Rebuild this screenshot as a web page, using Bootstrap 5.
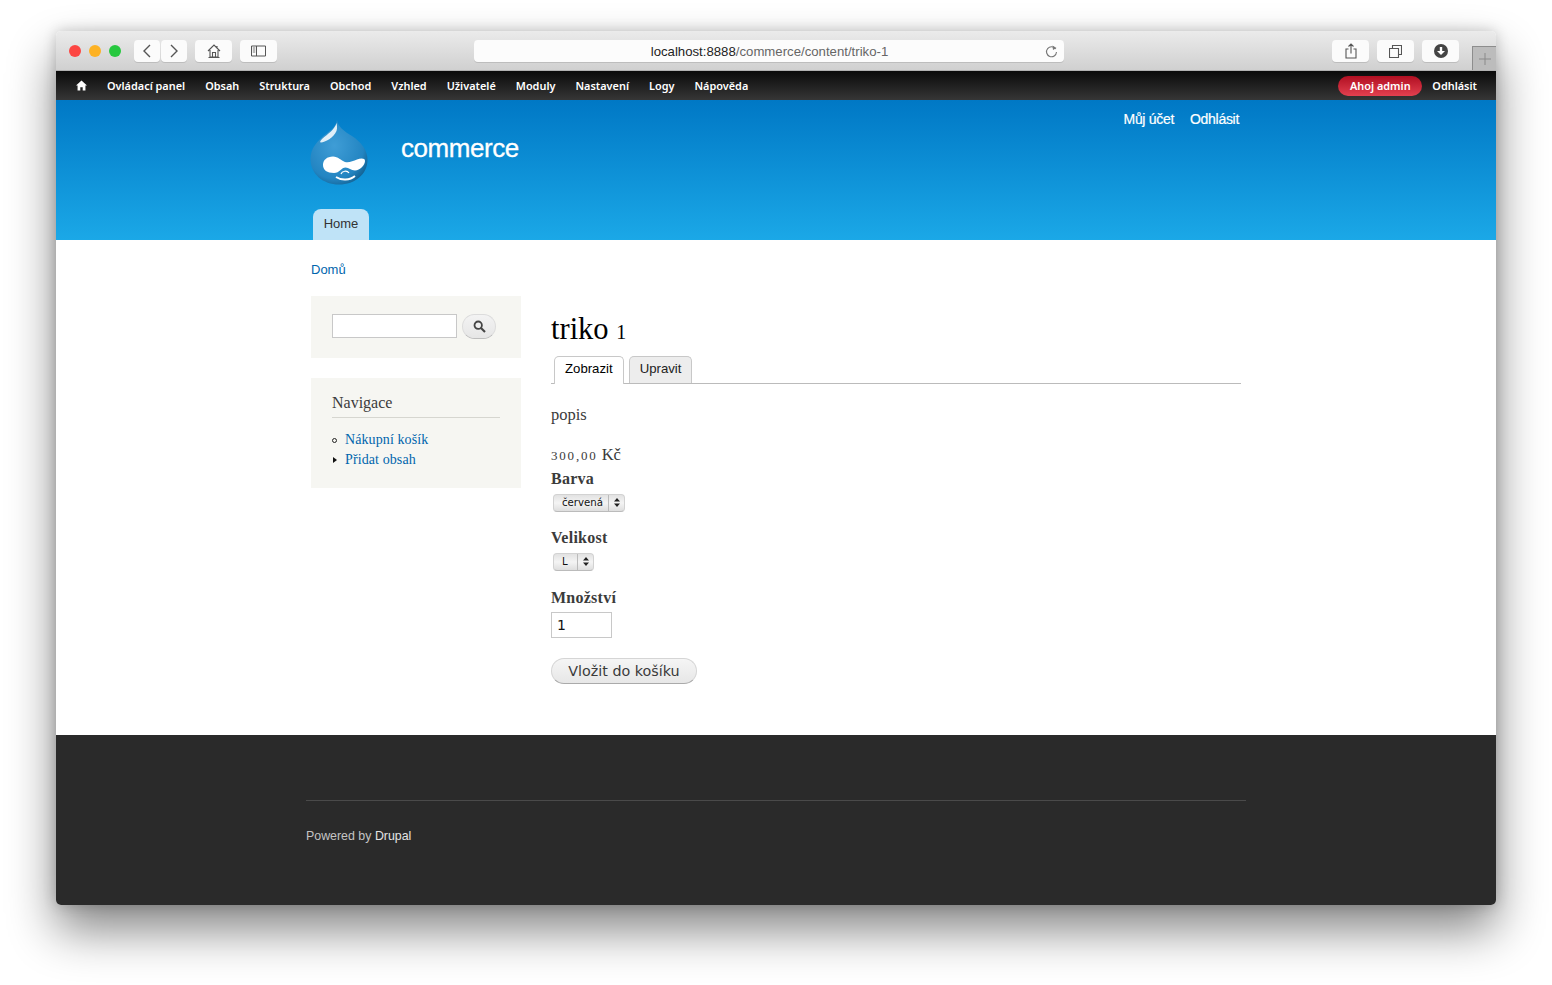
<!DOCTYPE html>
<html lang="cs">
<head>
  <meta charset="UTF-8">
  <title>triko 1 | commerce</title>
  <link href="https://cdn.jsdelivr.net/npm/bootstrap@5.3.3/dist/css/bootstrap.min.css" rel="stylesheet">
  <script src="https://cdn.jsdelivr.net/npm/bootstrap@5.3.3/dist/js/bootstrap.bundle.min.js"></script>
  <style>
    body { background: #fff; padding: 31px 56px 80px; font-family: "Liberation Serif", serif; color: #3b3b3b; }
    a { text-decoration: none; }
    .win { height: 874px; border-radius: 5px; background: #fff; box-shadow: 0 25px 48px rgba(0,0,0,.48), 0 0 14px rgba(0,0,0,.2); overflow: hidden; }

    .titlebar { height: 40px; padding: 9px 0 0 13px; background: linear-gradient(#ebebeb, #d0d0d0); border-bottom: 1px solid #b1b1b1; }
    .lights { gap: 8px; margin-right: 13px; height: 22px; }
    .light { width: 12px; height: 12px; border-radius: 50%; }
    .tb-btn { height: 22px; width: 37px; background: #fbfbfb; border-radius: 4px; box-shadow: 0 1px 0 #bdbdbd; }
    .tb-narrow { width: 26px; }
    .urlbar { width: 590px; height: 22px; margin-left: 197px; margin-right: 268px; background: #fcfcfc; border-radius: 4px; box-shadow: 0 1px 0 #bdbdbd; font: 13.200px "Liberation Sans", sans-serif; color: #666; padding: 0 6px; }
    .urlbar b { font-weight: 400; color: #222; }
    .urlbar .url-text { flex: 1; text-align: center; padding-left: 14px; }
    .newtab { width: 24px; height: 24px; margin-left: 13px; margin-top: 6px; background: #bcbcbc; border: 1px solid #8d8d8d; border-right: 0; border-bottom: 0; }

    .admin-bar { height: 29px; padding: 0 19px 0 20px; background: linear-gradient(#0a0a0a, #363636); font: 600 10.900px "Noto Sans", sans-serif; }
    .admin-bar a { color: #fff; }
    .admin-menu { gap: 20px; }
    .hello { height: 20px; width: 84px; border-radius: 10px; margin-right: 10px; background: linear-gradient(#b10f22, #e2404f); }

    .site-head { height: 140px; background: linear-gradient(#0078c5, #1ba8e7); }
    .wrap { width: 940px; margin: 0 auto; }
    .head-top { padding: 19px 7px 0 4px; height: 109px; }
    .site-name { font: 26px "Liberation Sans", sans-serif; color: #fff; letter-spacing: -.45px; margin-left: 33px; margin-top: 14px; -webkit-text-stroke: .3px #fff; }
    .sec-menu { gap: 16px; font: 14px "Liberation Sans", sans-serif; letter-spacing: -.3px; margin-left: auto; margin-top: -8px; -webkit-text-stroke: .2px #fff; }
    .sec-menu a { color: #fff; }
    .home-tab { display: block; margin-left: 7px; width: 56px; height: 31px; text-align: center; background: #bfe3f7; border-radius: 8px 8px 0 0; color: #333; font: 13px/30px "Liberation Sans", sans-serif; }

    .page-body { height: 495px; }
    .crumbs { padding: 22px 0 0 5px; height: 56px; font: 13px "Liberation Sans", sans-serif; }
    .crumbs a { color: #0065ad; }
    .side-col { width: 210px; margin-left: 5px; margin-right: 30px; }
    .side-box { background: #f6f6f2; padding: 18px 21px; margin-bottom: 20px; }
    .box-search { height: 62px; }
    .search-in { width: 125px; height: 24px; border: 1px solid #c8c8c8; background: #fff; padding: 0 4px; }
    .search-go { width: 34px; height: 25px; margin-left: 5px; padding: 0; border: 1px solid #dcdcdc; border-bottom-color: #bdbdbd; border-radius: 13px; background: linear-gradient(#f3f3f3, #e6e6e6); }
    .box-nav { height: 110px; padding-top: 15px; }
    .nav-title { font: 16px/20px "Liberation Serif", serif; color: #3b3b3b; padding-bottom: 4px; border-bottom: 1px solid #d6d6d0; width: 168px; margin: 0 0 12px; }
    .nav-links { list-style: none; margin: 0; padding: 0; font-size: 14px; line-height: 20px; letter-spacing: .1px; }
    .nav-links li { padding-left: 13px; position: relative; }
    .nav-links a { color: #0065ad; }
    .dot { position: absolute; left: 0; top: 8px; width: 5px; height: 5px; border: 1px solid #222; border-radius: 50%; }
    .tri { position: absolute; left: 1px; top: 7px; width: 0; height: 0; border-left: 4px solid #111; border-top: 3.500px solid transparent; border-bottom: 3.500px solid transparent; }

    .main-col { width: 690px; }
    .page-title { font: 30.500px/36px "Liberation Serif", serif; color: #000; margin: 0; padding-top: 15px; height: 60px; }
    .old-num { font-size: 20px; letter-spacing: 1px; }
    .view-tabs { height: 28px; padding-left: 3px; gap: 5px; border-bottom: 1px solid #bbb; font: 13.200px "Liberation Sans", sans-serif; }
    .view-tab { height: 27px; line-height: 24px; padding: 0 10px; border: 1px solid #c8c8c8; border-bottom: 0; border-radius: 5px 5px 0 0; background: #ededed; color: #222; }
    .view-tab.on { height: 28px; background: #fff; color: #000; }
    .body-txt { font-size: 16.500px; line-height: 20px; color: #3b3b3b; }
    .price-num { font-size: 13px; letter-spacing: 1.800px; }
    .fld-label { font-weight: 700; font-size: 16px; line-height: 20px; color: #3b3b3b; letter-spacing: .25px; }
    .sel-box { display: inline-flex; align-items: stretch; height: 18px; margin-left: 2px; border-radius: 4px; background: linear-gradient(#e2e2e2, #f4f4f4 50%, #dedede); border: 1px solid #d2d2d2; border-bottom-color: #bbb; }
    .sel-box select { appearance: none; border: 0; background: transparent; font: 10.200px "DejaVu Sans", sans-serif; color: #111; padding: 0 0 0 8px; outline: 0; }
    .sel-wide { width: 54px; }
    .sel-thin { width: 23px; }
    .sel-arrow { width: 16px; border-left: 1px solid #bbb; display: flex; align-items: center; justify-content: center; }
    .qty-in { width: 61px; height: 26px; border: 1px solid #c8c8c8; padding: 0 5px; font: 14px "DejaVu Sans", sans-serif; color: #111; display: block; }
    .buy-btn { height: 26px; width: 146px; padding: 0; border: 1px solid #d5d5d5; border-bottom-color: #aaa; border-radius: 13px; background: linear-gradient(#f5f5f5, #e7e7e7); font: 14.300px "DejaVu Sans", sans-serif; color: #3a3a3a; }

    .site-foot { height: 170px; background: #2a2a2a; padding-top: 65px; }
    .foot-line { border-top: 1px solid #4a4a4a; padding-top: 27px; font: 12.400px/17px "Liberation Sans", sans-serif; color: #c4c4c4; }
    .foot-line a { color: #e4e4e4; }
  </style>
</head>
<body>
  <div class="win d-flex flex-column">
    <div class="titlebar d-flex align-items-start">
      <div class="lights d-flex align-items-center">
        <span class="light" style="background:#fc4643"></span>
        <span class="light" style="background:#fdb224"></span>
        <span class="light" style="background:#27c83f"></span>
      </div>
      <div class="d-flex" style="gap:1px">
        <span class="tb-btn tb-narrow d-flex align-items-center justify-content-center"><svg width="10" height="14" viewBox="0 0 10 14"><path d="M8 1 2 7l6 6" fill="none" stroke="#555" stroke-width="1.400"/></svg></span>
        <span class="tb-btn tb-narrow d-flex align-items-center justify-content-center"><svg width="10" height="14" viewBox="0 0 10 14"><path d="m2 1 6 6-6 6" fill="none" stroke="#555" stroke-width="1.400"/></svg></span>
      </div>
      <span class="tb-btn d-flex align-items-center justify-content-center ms-2"><svg width="14" height="14" viewBox="0 0 14 14"><path d="M1 7 7 1l6 6M3 6v7h8V6M1.500 13.500h11M5.500 13V8.500h3V13M10 2v2.500" fill="none" stroke="#555" stroke-width="1.100"/></svg></span>
      <span class="tb-btn d-flex align-items-center justify-content-center ms-2"><svg width="15" height="12" viewBox="0 0 15 12"><path d="M.5 1h14v10H.5zM5.500 1v10" fill="none" stroke="#555"/><path d="M1.800 3h2.500M1.800 5h2.500M1.800 7h2.500" stroke="#777"/></svg></span>
      <div class="urlbar d-flex align-items-center">
        <span class="url-text"><b>localhost:8888</b>/commerce/content/triko-1</span>
        <svg width="13" height="13" viewBox="0 0 13 13"><path d="M10.700 4A5 5 0 1 0 11.500 7" fill="none" stroke="#777" stroke-width="1.100"/><path d="M7.500 .5 11.500 3 8 5z" fill="#777"/></svg>
      </div>
      <span class="tb-btn d-flex align-items-center justify-content-center"><svg width="12" height="16" viewBox="0 0 12 16"><path d="M3.500 6H1v9h10V6H8.500M6 10.500V1M3.500 3.500 6 1l2.500 2.500" fill="none" stroke="#555" stroke-width="1.100"/></svg></span>
      <span class="tb-btn d-flex align-items-center justify-content-center ms-2"><svg width="13" height="13" viewBox="0 0 13 13"><path d="M.5 3.500h9v9h-9zM3.500 3.500v-3h9v9h-3" fill="none" stroke="#555" stroke-width="1.100"/></svg></span>
      <span class="tb-btn d-flex align-items-center justify-content-center ms-2"><svg width="14" height="14" viewBox="0 0 14 14"><circle cx="7" cy="7" r="7" fill="#444"/><path d="M5.800 3h2.400v4H11L7 11 3 7h2.800z" fill="#fff"/></svg></span>
      <span class="newtab d-flex align-items-center justify-content-center"><svg width="12" height="12" viewBox="0 0 12 12"><path d="M6 0v12M0 6h12" stroke="#8a8a8a"/></svg></span>
    </div>

    <div class="admin-bar d-flex align-items-center">
      <div class="admin-menu d-flex align-items-center">
        <a href="#" class="d-flex"><svg width="11" height="11" viewBox="0 0 12 11"><path d="M6 0 0 5.500h1.700V11h3V7.500h2.600V11h3V5.500H12z" fill="#fff"/></svg></a>
        <a href="#">Ovládací panel</a>
        <a href="#">Obsah</a>
        <a href="#">Struktura</a>
        <a href="#">Obchod</a>
        <a href="#">Vzhled</a>
        <a href="#">Uživatelé</a>
        <a href="#">Moduly</a>
        <a href="#">Nastavení</a>
        <a href="#">Logy</a>
        <a href="#">Nápověda</a>
      </div>
      <a href="#" class="hello ms-auto d-flex align-items-center justify-content-center">Ahoj admin</a>
      <a href="#">Odhlásit</a>
    </div>

    <header class="site-head">
      <div class="wrap">
        <div class="head-top d-flex align-items-start">
          <svg width="58" height="66" viewBox="0 0 58 66">
            <defs>
              <radialGradient id="dropFill" cx=".42" cy=".4" r=".68"><stop offset="0" stop-color="#3f9dd6"/><stop offset=".75" stop-color="#2385c2"/><stop offset="1" stop-color="#125f8f"/></radialGradient>
            </defs>
            <path d="M27 1C28 8 34 12 42 17 51 23 57.500 31 57.500 41 57.500 55 45 65.500 29 65.500 13 65.500 .5 55 .5 40 .5 29 8 21 16 15 21 11 26 8 27 1z" fill="url(#dropFill)"/>
            <path d="M26.500 4C25 10 18 15 12 20c-2 2-2.500 3.500-1 3.500 4 0 13-5 15.500-11.500 1-3 .5-6 0-8z" fill="#fff" fill-opacity=".85"/>
            <path d="M13 46c0-5 4-8.500 10-8.500 5 0 8 4 12 5.500 4 1 8-1 12-2.500 4-1.500 8-1.500 8 1.500 0 4-5 9.500-10 9.500-4 0-6-3-9.500-3-4 0-6 5.500-11.500 5.500-7 0-11-3-11-8z" fill="#fff"/>
            <path d="M26 58c5 3.500 14 3.500 19-1" fill="none" stroke="#fff" stroke-width="1.800"/>
            <path d="M31 55c1-3 6-4 8-1" fill="none" stroke="#fff" stroke-width="1.200"/>
          </svg>
          <div class="site-name">commerce</div>
          <nav class="sec-menu d-flex">
            <a href="#">Můj účet</a>
            <a href="#">Odhlásit</a>
          </nav>
        </div>
        <a href="#" class="home-tab">Home</a>
      </div>
    </header>

    <main class="page-body">
      <div class="wrap">
        <div class="crumbs"><a href="#">Domů</a></div>
        <div class="d-flex align-items-start">
          <aside class="side-col">
            <div class="side-box box-search d-flex align-items-start">
              <input type="text" class="search-in" aria-label="Hledat">
              <button type="button" class="search-go d-flex align-items-center justify-content-center" aria-label="Hledat"><svg width="13" height="13" viewBox="0 0 13 13"><circle cx="5.200" cy="5.200" r="3.700" fill="none" stroke="#444" stroke-width="1.800"/><path d="m8 8 4 4" stroke="#444" stroke-width="2.200"/></svg></button>
            </div>
            <div class="side-box box-nav">
              <h2 class="nav-title">Navigace</h2>
              <ul class="nav-links">
                <li><span class="dot"></span><a href="#">Nákupní košík</a></li>
                <li><span class="tri"></span><a href="#">Přidat obsah</a></li>
              </ul>
            </div>
          </aside>
          <section class="main-col">
            <h1 class="page-title">triko <span class="old-num">1</span></h1>
            <div class="view-tabs d-flex align-items-start">
              <a href="#" class="view-tab on">Zobrazit</a>
              <a href="#" class="view-tab">Upravit</a>
            </div>
            <p class="body-txt mb-0" style="margin-top:21px">popis</p>
            <p class="body-txt mb-0" style="margin-top:20px"><span class="price-num">300,00</span> Kč</p>
            <div class="fld-label" style="margin-top:3px">Barva</div>
            <div class="sel-box" style="margin-top:4px"><select class="sel-wide" aria-label="Barva"><option>červená</option></select><span class="sel-arrow"><svg width="6" height="9" viewBox="0 0 6 9"><path d="M3 0 6 3.500H0zM3 9 0 5.500h6z" fill="#222"/></svg></span></div>
            <div class="fld-label" style="margin-top:15px">Velikost</div>
            <div class="sel-box" style="margin-top:3px"><select class="sel-thin" aria-label="Velikost"><option>L</option></select><span class="sel-arrow"><svg width="6" height="9" viewBox="0 0 6 9"><path d="M3 0 6 3.500H0zM3 9 0 5.500h6z" fill="#222"/></svg></span></div>
            <div class="fld-label" style="margin-top:16px">Množství</div>
            <input type="text" class="qty-in" value="1" style="margin-top:4px" aria-label="Množství">
            <button type="button" class="buy-btn" style="margin-top:20px">Vložit do košíku</button>
          </section>
        </div>
      </div>
    </main>

    <footer class="site-foot">
      <div class="wrap foot-line">Powered by <a href="#">Drupal</a></div>
    </footer>
  </div>
</body>
</html>
